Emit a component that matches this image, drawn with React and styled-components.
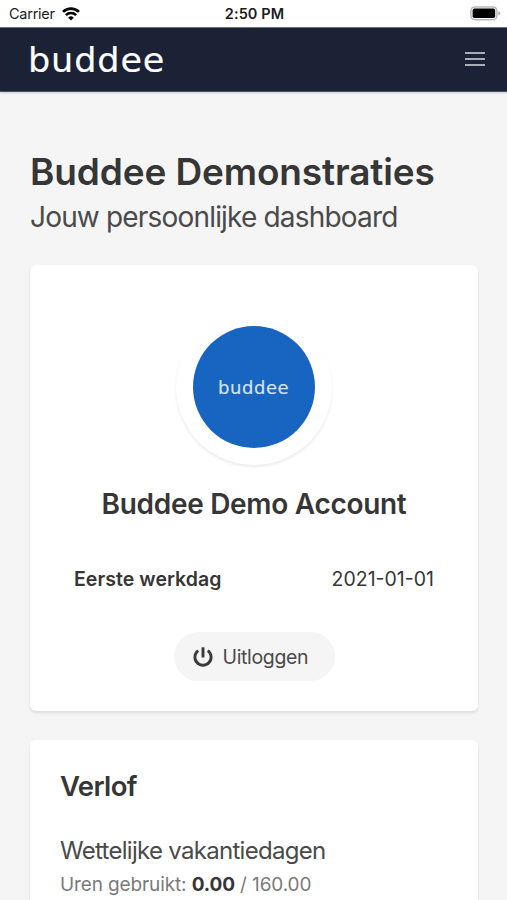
import React from "react";
import styled, { createGlobalStyle } from "styled-components";

function App() {
  return (
    <>
      <GlobalStyle />
      <Screen>
        <StatusBar>
          <Carrier>
            Carrier
            <WifiIcon />
          </Carrier>
          <Clock>2:50 PM</Clock>
          <BatterySlot>
            <BatteryIcon />
          </BatterySlot>
        </StatusBar>
        <Nav>
          <Logo>buddee</Logo>
          <MenuButton aria-label="Menu">
            <span />
            <span />
            <span />
          </MenuButton>
        </Nav>
        <Content>
          <Title>Buddee Demonstraties</Title>
          <Subtitle>Jouw persoonlijke dashboard</Subtitle>
          <ProfileCard>
            <Avatar>
              <AvatarImage>
                <AvatarLogo>buddee</AvatarLogo>
              </AvatarImage>
            </Avatar>
            <AccountName>Buddee Demo Account</AccountName>
            <InfoRow>
              <strong>Eerste werkdag</strong>
              <span>2021-01-01</span>
            </InfoRow>
            <LogoutButton>
              <PowerIcon />
              Uitloggen
            </LogoutButton>
          </ProfileCard>
          <LeaveCard>
            <CardTitle>Verlof</CardTitle>
            <LeaveType>Wettelijke vakantiedagen</LeaveType>
            <Hours>
              Uren gebruikt: <b>0.00</b> / 160.00
            </Hours>
          </LeaveCard>
        </Content>
      </Screen>
    </>
  );
}

export default App;

function WifiIcon() {
  return (
    <svg width="18" height="14" viewBox="0 0 18 14" fill="none" stroke="#000">
      <path d="M1 4.9a11.4 11.4 0 0 1 16 0" strokeWidth="2.7" />
      <path d="M3.9 8.2a7.2 7.2 0 0 1 10.2 0" strokeWidth="2.5" />
      <path d="M9 13.6 6.2 10.7a4 4 0 0 1 5.6 0z" fill="#000" stroke="none" />
    </svg>
  );
}

function BatteryIcon() {
  return (
    <svg width="31" height="15" viewBox="0 0 31 15">
      <rect x="0.9" y="0.9" width="26" height="12.8" rx="3.8" fill="#fff" stroke="#b9b9b9" strokeWidth="1.5" />
      <rect x="2.6" y="2.6" width="22.6" height="9.4" rx="1.8" fill="#000" />
      <path d="M28.4 5.1q2 .8 2 2.2t-2 2.2z" fill="#b0b0b0" />
    </svg>
  );
}

function PowerIcon() {
  return (
    <svg width="20" height="20" viewBox="0 0 20 20" fill="none" stroke="#3a3a3a" strokeWidth="2.9">
      <path d="M5.2 3.6a8.1 8.1 0 1 0 9.6 0" />
      <path d="M10 0.3v10.2" />
    </svg>
  );
}

const GlobalStyle = createGlobalStyle`
  * {
    box-sizing: border-box;
  }

  body {
    margin: 0;
    background: #f5f5f5;
    color: #363636;
    font-family: Inter, "Liberation Sans", sans-serif;
  }
`;

const Screen = styled.div`
  height: 900px;
  overflow: hidden;
`;

const StatusBar = styled.header`
  display: grid;
  grid-template-columns: 1fr auto 1fr;
  align-items: center;
  height: 27px;
  padding: 0 6px 0 9px;
  background: #fff;
  color: #1c1c1c;
`;

const Carrier = styled.div`
  display: flex;
  align-items: center;
  gap: 7px;
  font-size: 14.5px;
  letter-spacing: -0.25px;
`;

const Clock = styled.div`
  margin-right: 1px;
  font-size: 14.5px;
  font-weight: 600;
  letter-spacing: 0.1px;
`;

const BatterySlot = styled.div`
  display: flex;
  justify-content: flex-end;
`;

const Nav = styled.nav`
  display: flex;
  align-items: center;
  justify-content: space-between;
  height: 65px;
  padding: 0 22px 0 28px;
  background: #1b2235;
  border-top: 1px solid #6c7080;
  border-bottom: 1px solid #4d5262;
  box-shadow: 0 1px 2px rgba(60, 60, 110, 0.25);
`;

const Logo = styled.span`
  font-family: "DejaVu Sans", sans-serif;
  font-size: 34px;
  line-height: 1;
  letter-spacing: 0.025em;
  color: #fff;
  -webkit-text-stroke: 0.15px #fff;
  transform: scaleX(1.03);
  transform-origin: left;
`;

const AvatarLogo = styled(Logo)`
  margin-top: 3px;
  font-size: 17.5px;
  letter-spacing: 0.03em;
  color: #d5e4f7;
  -webkit-text-stroke: 0.15px #d5e4f7;
  transform-origin: center;
`;

const MenuButton = styled.button`
  display: flex;
  flex-direction: column;
  gap: 4px;
  margin-top: -1px;
  padding: 0;
  border: 0;
  background: none;

  span {
    width: 20px;
    height: 2px;
    background: #a9adb7;
  }
`;

const Content = styled.main`
  padding: 57px 29px 0 30px;
`;

const Title = styled.h1`
  margin: 0;
  font-size: 37px;
  font-weight: 600;
  line-height: 46px;
  letter-spacing: -0.13px;
  white-space: nowrap;
`;

const Subtitle = styled.p`
  margin: 0 0 27px;
  padding-top: 1px;
  font-size: 28px;
  line-height: 42px;
  letter-spacing: -0.82px;
  color: #4a4a4a;
`;

const Card = styled.section`
  background: #fff;
  border-radius: 6px;
  box-shadow: 0 2px 3px rgba(0, 0, 0, 0.1);
`;

const ProfileCard = styled(Card)`
  display: flex;
  flex-direction: column;
  align-items: center;
  height: 446px;
  margin-bottom: 29px;
  padding: 44px 44px 0;
`;

const Avatar = styled.div`
  display: grid;
  place-items: center;
  width: 156px;
  height: 156px;
  border-radius: 50%;
  background: #fff;
  box-shadow: 0 2px 3px rgba(0, 0, 0, 0.08);
`;

const AvatarImage = styled.div`
  display: grid;
  place-items: center;
  width: 122px;
  height: 122px;
  border-radius: 50%;
  background: #1765c1;
`;

const AccountName = styled.h2`
  margin: 20px 0 0;
  font-size: 28px;
  font-weight: 600;
  line-height: 38px;
  letter-spacing: -0.3px;
`;

const InfoRow = styled.div`
  display: flex;
  justify-content: space-between;
  align-self: stretch;
  margin-top: 42px;
  font-size: 19.5px;
  line-height: 28px;

  strong {
    font-weight: 600;
    letter-spacing: 0.05px;
  }
`;

const LogoutButton = styled.button`
  display: flex;
  align-items: center;
  gap: 10px;
  width: 161px;
  height: 49px;
  margin-top: 39px;
  padding: 0 0 0 19px;
  border: 0;
  border-radius: 25px;
  background: #f5f5f5;
  color: #4a4a4a;
  font-family: inherit;
  font-size: 19.5px;
  letter-spacing: -0.35px;
`;

const LeaveCard = styled(Card)`
  height: 220px;
  padding: 27px 30px;
`;

const CardTitle = styled.h2`
  margin: 0 0 28px;
  font-size: 27.5px;
  font-weight: 600;
  line-height: 38px;
  letter-spacing: -0.65px;
`;

const LeaveType = styled.p`
  margin: 0;
  font-size: 24px;
  line-height: 36px;
  letter-spacing: -0.71px;
  color: #4a4a4a;
`;

const Hours = styled.p`
  margin: 0;
  font-size: 19px;
  line-height: 31px;
  letter-spacing: -0.12px;
  color: #7a7a7a;

  b {
    color: #363636;
  }
`;
